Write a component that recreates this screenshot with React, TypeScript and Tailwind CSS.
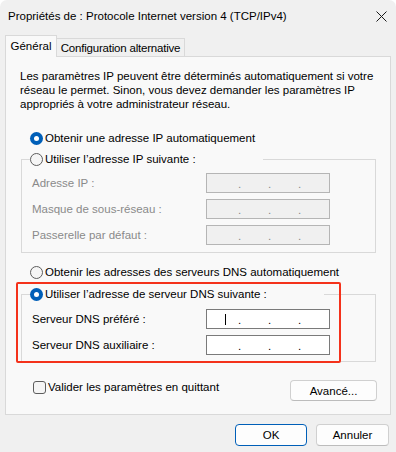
import React from "react";

function Radio({ checked }: { checked?: boolean }) {
  if (checked) {
    return (
      <span className="flex h-[13px] w-[13px] shrink-0 items-center justify-center rounded-full bg-[#005fb8]">
        <span className="h-[5px] w-[5px] rounded-full bg-white" />
      </span>
    );
  }
  return <span className="h-[13px] w-[13px] shrink-0 rounded-full border border-[#5d5d5d] bg-[#f5f5f5]" />;
}

function IpBox({ disabled, cursor }: { disabled?: boolean; cursor?: boolean }) {
  return (
    <div
      className={
        "relative flex h-[20px] w-[124px] items-end border pb-[2px] " +
        (disabled ? "border-[#b5b5b5] bg-[#f0f0f0] text-[#8a8a8a]" : "border-[#7a7a7a] bg-white text-black")
      }
    >
      {cursor && <span className="absolute left-[18px] top-[4px] h-[11px] w-px bg-black" />}
      <span className="ml-[31px] w-[30px] leading-none">.</span>
      <span className="w-[30px] leading-none">.</span>
      <span className="leading-none">.</span>
    </div>
  );
}

function Field({ label, disabled, cursor }: { label: string; disabled?: boolean; cursor?: boolean }) {
  return (
    <div className="flex items-center">
      <span className={"w-[174px] " + (disabled ? "text-[#8a8a8a]" : "text-black")}>{label}</span>
      <IpBox disabled={disabled} cursor={cursor} />
    </div>
  );
}

export default function App() {
  return (
    <div className="flex h-[452px] w-[396px] flex-col overflow-hidden rounded-t-[7px] bg-[#f0f0f0] font-['Liberation_Sans',Arial,sans-serif] text-[11.5px] leading-[14px] text-black">
      {/* title bar */}
      <div className="flex h-[32px] shrink-0 items-center justify-between pl-[8px] pr-[8px]">
        <span>Propriétés de : Protocole Internet version 4 (TCP/IPv4)</span>
        <svg width="11" height="11" viewBox="0 0 11 11" className="mr-[1px]">
          <path d="M0.5 0.5 L10.5 10.5 M10.5 0.5 L0.5 10.5" stroke="#1a1a1a" strokeWidth="1" />
        </svg>
      </div>

      <div className="flex flex-col px-[5px]">
        {/* tabs */}
        <div className="flex h-[24px] items-end">
          <div className="relative z-10 -mb-px flex h-[22px] w-[52px] items-start justify-center border border-b-0 border-[#d9d9d9] bg-[#f9f9f9] pt-[3px]">
            Général
          </div>
          <div className="flex h-[18px] w-[128px] items-center justify-center border border-b-0 border-l-0 border-[#d9d9d9] bg-[#f0f0f0] tracking-[-0.2px]">
            Configuration alternative
          </div>
        </div>

        {/* tab page */}
        <div className="flex h-[359px] flex-col border border-[#d9d9d9] bg-[#f9f9f9]">
          <p className="ml-[14px] mt-[12px]">
            Les paramètres IP peuvent être déterminés automatiquement si votre
            <br />
            réseau le permet. Sinon, vous devez demander les paramètres IP
            <br />
            appropriés à votre administrateur réseau.
          </p>

          <div className="ml-[24px] mt-[19px] flex h-[16px] items-center gap-[2px]">
            <Radio checked />
            <span>Obtenir une adresse IP automatiquement</span>
          </div>

          <fieldset className="ml-[15px] mt-[5px] w-[355px] border border-[#d9d9d9] pb-[7px] pl-[10px]">
            <legend className="-ml-[2px] flex h-[16px] w-[233px] items-center gap-[2px]">
              <Radio />
              <span>Utiliser l’adresse IP suivante :</span>
            </legend>
            <div className="mt-[6px] flex flex-col gap-[6px]">
              <Field label="Adresse IP :" disabled />
              <Field label="Masque de sous-réseau :" disabled />
              <Field label="Passerelle par défaut :" disabled />
            </div>
          </fieldset>

          <div className="ml-[24px] mt-[11px] flex h-[16px] items-center gap-[2px]">
            <Radio />
            <span>Obtenir les adresses des serveurs DNS automatiquement</span>
          </div>

          <div className="relative mt-[6px]">
            <fieldset className="ml-[15px] w-[355px] border border-[#d9d9d9] pb-[6px] pl-[10px]">
              <legend className="-ml-[2px] flex h-[16px] w-[294px] items-center gap-[2px]">
                <Radio checked />
                <span>Utiliser l’adresse de serveur DNS suivante :</span>
              </legend>
              <div className="mt-[7px] flex flex-col gap-[6px]">
                <Field label="Serveur DNS préféré :" cursor />
                <Field label="Serveur DNS auxiliaire :" />
              </div>
            </fieldset>
            {/* annotation */}
            <div className="pointer-events-none absolute left-[10px] top-[-4px] h-[81px] w-[325px] rounded-[2px] border-[2.5px] border-[#f4321b]" />
          </div>

          <div className="ml-[27px] mr-[13px] mt-[18px] flex items-start justify-between">
            <div className="flex items-center gap-[2px]">
              <span className="h-[13px] w-[13px] rounded-[3px] border border-[#5d5d5d] bg-[#f5f5f5]" />
              <span>Valider les paramètres en quittant</span>
            </div>
            <button className="flex h-[21px] w-[87px] items-center justify-center rounded-[4px] border border-[#d0d0d0] border-b-[#bcbcbc] bg-[#fdfdfd]">
              Avancé...
            </button>
          </div>
        </div>
      </div>

      <div className="mr-[7px] mt-[9px] flex justify-end gap-[9px]">
        <button className="flex h-[22px] w-[72px] items-center justify-center rounded-[4px] border border-[#005fb8] bg-[#fdfdfd]">
          OK
        </button>
        <button className="flex h-[22px] w-[73px] items-center justify-center rounded-[4px] border border-[#d0d0d0] border-b-[#bcbcbc] bg-[#fdfdfd]">
          Annuler
        </button>
      </div>
    </div>
  );
}
